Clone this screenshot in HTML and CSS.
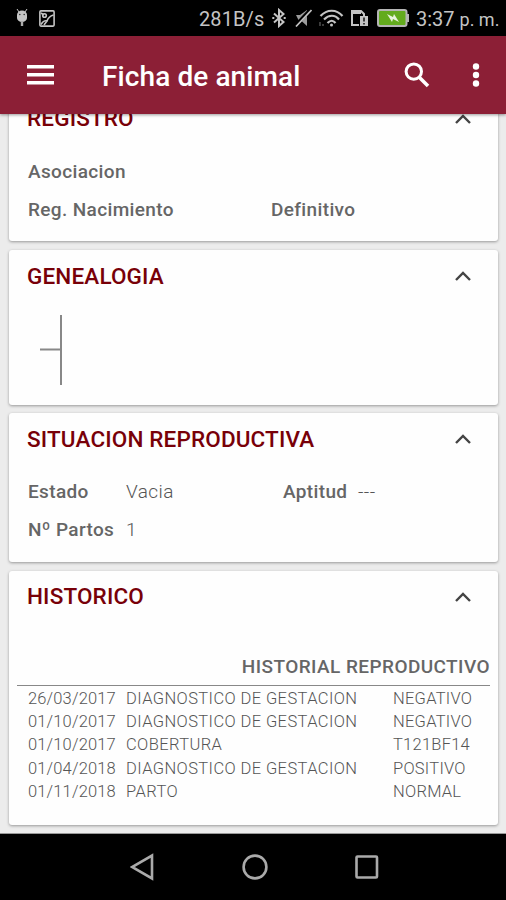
FILE: index.html
```
<!DOCTYPE html>
<html lang="es">
<head>
    <meta charset="UTF-8">
    <meta name="viewport" content="width=device-width, initial-scale=1.0">
    <title>Ficha de animal</title>
    <link rel="stylesheet" href="styles.css">
</head>
<body>
    <div class="status-bar">
        <div class="status-left">
            <svg width="12" height="18" viewBox="0 0 12 18">
                <path d="M1 0l2 3M11 0L9 3" stroke="#c4c4c4" stroke-width="1"/>
                <path d="M1 6a5 4.5 0 0 1 10 0v3a5 4 0 0 1-10 0z" fill="#c4c4c4"/>
                <path d="M6 12v5" stroke="#aaa" stroke-width="2.4"/>
                <circle cx="3.8" cy="5.5" r=".8" fill="#333"/>
                <circle cx="8.2" cy="5.5" r=".8" fill="#333"/>
            </svg>
            <svg width="16" height="17" viewBox="0 0 16 17" fill="none" stroke="#c4c4c4" stroke-width="1.6">
                <rect x=".9" y=".9" width="14.2" height="15.2" rx="1"/>
                <circle cx="5.5" cy="5.5" r="1.8"/>
                <path d="M2 3l3 2M2 14.5c2.500-4 4-4 6-3.500 1-3 3-5 6.500-6M5 15l3-4"/>
            </svg>
        </div>
        <div class="status-right">
            <span class="net-speed">281B/s</span>
            <svg class="i-bt" width="14" height="20" viewBox="0 0 14 20" fill="none" stroke="#c4c4c4" stroke-width="2">
                <path d="M2 5.500l9.500 8.500L7 18V2l4.500 4L2 14.500"/>
                <path d="M.3 10h2M11.700 10h2"/>
            </svg>
            <svg class="i-mute" width="18" height="18" viewBox="0 0 18 18">
                <path d="M2 6h4l7-5v16L7.500 12H5z" fill="#9b9b9b"/>
                <path d="M17 0L1 17" stroke="#000" stroke-width="3.500"/>
                <path d="M17.500 1L2 17.500" stroke="#c4c4c4" stroke-width="1.700"/>
            </svg>
            <svg class="i-wifi" width="25" height="18" viewBox="0 0 25 18" fill="none" stroke="#c4c4c4" stroke-width="2.2">
                <path d="M1.500 7c6.500-7 16-7 22 0M5 10.500c5-5 11-5 15 0M8.500 14c3-3 5.500-3 8 0"/>
                <circle cx="12.500" cy="16" r="1.500" fill="#c4c4c4" stroke="none"/>
                <path d="M1 17v-4M4 17v-2" stroke="#777" stroke-width="1"/>
            </svg>
            <svg class="i-sim" width="19" height="18" viewBox="0 0 19 18">
                <path d="M9 16H2V2h9l3 3v3" fill="none" stroke="#c4c4c4" stroke-width="2"/>
                <path d="M3 2h8v3H3z" fill="#c4c4c4"/>
                <path d="M10 7h8v10h-8z" fill="#c4c4c4"/>
                <path d="M14 8.500v4M14 14v1.500" stroke="#111" stroke-width="1.500"/>
            </svg>
            <svg class="i-batt" width="33" height="18" viewBox="0 0 33 18">
                <rect x="1" y="1" width="28.500" height="16" rx="2" fill="#63ab1d" stroke="#b5b5b5" stroke-width="2"/>
                <path d="M30 5h2v8h-2z" fill="#b5b5b5"/>
                <path d="M10 5l6 3 1-3 5 8-6-3-1 3z" fill="#e8f3dc"/>
            </svg>
            <span class="clock">3:37 <small>p. m.</small></span>
        </div>
    </div>

    <div class="app-bar">
        <svg class="menu" width="27" height="20" viewBox="0 0 27 20" fill="#fff">
            <path d="M0 0h27v3.600H0zM0 8h27v3.600H0zM0 16h27v3.600H0z"/>
        </svg>
        <h1>Ficha de animal</h1>
        <svg class="search" width="26" height="26" viewBox="0 0 26 26" fill="none" stroke="#fff">
            <circle cx="9.800" cy="9.600" r="7.700" stroke-width="3"/>
            <path d="M15.500 15.500l8.500 8.500" stroke-width="3.600"/>
        </svg>
        <svg class="more" width="8" height="24" viewBox="0 0 8 24" fill="#fff">
            <circle cx="4" cy="3.500" r="3.200"/>
            <circle cx="4" cy="12" r="3.200"/>
            <circle cx="4" cy="20.500" r="3.200"/>
        </svg>
    </div>

    <div class="content">
        <div class="card registro">
            <div class="card-header">
                <h2>REGISTRO</h2>
                <svg width="18" height="12" viewBox="0 0 18 12"><path d="M2 10l7-7 7 7"/></svg>
            </div>
            <div class="row"><b>Asociacion</b></div>
            <div class="row"><b>Reg. Nacimiento</b><b>Definitivo</b></div>
        </div>

        <div class="card genealogia">
            <div class="card-header">
                <h2>GENEALOGIA</h2>
                <svg width="18" height="12" viewBox="0 0 18 12"><path d="M2 10l7-7 7 7"/></svg>
            </div>
            <svg class="tree" width="24" height="72" viewBox="0 0 24 72">
                <path d="M1 35.500h21M22 1v70"/>
            </svg>
        </div>

        <div class="card situacion">
            <div class="card-header">
                <h2>SITUACION REPRODUCTIVA</h2>
                <svg width="18" height="12" viewBox="0 0 18 12"><path d="M2 10l7-7 7 7"/></svg>
            </div>
            <div class="row"><b>Estado</b><span>Vacia</span><b>Aptitud</b><span>---</span></div>
            <div class="row"><b>Nº Partos</b><span>1</span></div>
        </div>

        <div class="card historico">
            <div class="card-header">
                <h2>HISTORICO</h2>
                <svg width="18" height="12" viewBox="0 0 18 12"><path d="M2 10l7-7 7 7"/></svg>
            </div>
            <h3>HISTORIAL REPRODUCTIVO</h3>
            <table>
                <tr><td class="date">26/03/2017</td><td class="event">DIAGNOSTICO DE GESTACION</td><td>NEGATIVO</td></tr>
                <tr><td class="date">01/10/2017</td><td class="event">DIAGNOSTICO DE GESTACION</td><td>NEGATIVO</td></tr>
                <tr><td class="date">01/10/2017</td><td class="event">COBERTURA</td><td>T121BF14</td></tr>
                <tr><td class="date">01/04/2018</td><td class="event">DIAGNOSTICO DE GESTACION</td><td>POSITIVO</td></tr>
                <tr><td class="date">01/11/2018</td><td class="event">PARTO</td><td>NORMAL</td></tr>
            </table>
        </div>
    </div>

    <div class="nav-bar">
        <svg width="24" height="28" viewBox="0 0 24 28"><path d="M22 2.500v23L2 14z"/></svg>
        <svg width="26" height="28" viewBox="0 0 26 28"><circle cx="13" cy="14" r="11.400"/></svg>
        <svg width="24" height="28" viewBox="0 0 24 28"><rect x="1.500" y="3.500" width="20.500" height="21" rx="1"/></svg>
    </div>
</body>
</html>
```
FILE: styles.css
```
:root {
    --primary-color: #8c1f36;
    --title-color: #780008;
    --text-color: #666;
    --icon-color: #aaa;
}

* {
    box-sizing: border-box;
    margin: 0;
    padding: 0;
}

body {
    width: 506px;
    height: 900px;
    overflow: hidden;
    display: flex;
    flex-direction: column;
    font-family: Roboto, sans-serif;
    background-color: #ececec;
    color: var(--text-color);
}

svg {
    display: block;
    flex: none;
}

.status-bar {
    flex: none;
    height: 36px;
    padding: 0 8px 0 16px;
    display: flex;
    align-items: center;
    justify-content: space-between;
    background-color: #000;
    color: #c4c4c4;
}

.status-left,
.status-right {
    display: flex;
    align-items: center;
}

.status-left {
    gap: 11px;
}

.status-right {
    white-space: nowrap;
}

.net-speed {
    width: 73px;
    padding-top: 2px;
    font-size: 20px;
    letter-spacing: 0.1px;
}

.i-mute {
    margin-left: 8px;
}

.i-wifi {
    margin-left: 7px;
}

.i-sim {
    margin-left: 6px;
}

.i-batt {
    margin-left: 8px;
}

.clock {
    width: 82px;
    margin-left: 6px;
    padding-top: 2px;
    font-size: 20px;
}

.clock small {
    font-size: 18px;
}

.app-bar {
    flex: none;
    position: relative;
    z-index: 1;
    height: 78px;
    padding: 0 26px 0 27px;
    display: flex;
    align-items: center;
    background-color: var(--primary-color);
    box-shadow: 0 1px 3px rgba(0, 0, 0, 0.4);
}

.app-bar h1 {
    flex: 1;
    margin-left: 48px;
    padding-top: 3px;
    font-size: 28px;
    font-weight: 500;
    letter-spacing: 0.1px;
    color: #fff;
}

.app-bar .more {
    margin-left: 42px;
}

.content {
    flex: none;
    height: 720px;
    padding: 0 8px 0 9px;
    overflow: hidden;
    border-bottom: 1px solid #999;
}

.card {
    margin-bottom: 9px;
    overflow: hidden;
    border-radius: 3px;
    background-color: #fefefe;
    box-shadow: 0 1px 3px rgba(0, 0, 0, 0.36);
}

/* the list is scrolled, first card starts under the app bar */
.registro {
    height: 148px;
    margin-top: -21px;
}

.genealogia {
    height: 155px;
    margin-bottom: 8px;
}

.situacion {
    height: 149px;
}

.historico {
    height: 254px;
}

.card-header {
    height: 60px;
    padding: 0 26px 8px 18px;
    display: flex;
    align-items: center;
    justify-content: space-between;
}

.card-header h2 {
    font-size: 22.5px;
    font-weight: 500;
    letter-spacing: 0.15px;
    color: var(--title-color);
}

.registro h2,
.historico h2 {
    padding-bottom: 2px;
}

.card-header path {
    fill: none;
    stroke: #444;
    stroke-width: 2.4;
}

.row {
    height: 38px;
    padding: 0 0 2px 19px;
    display: grid;
    align-items: center;
    font-size: 19px;
}

.row b {
    font-weight: 500;
    letter-spacing: 0.36px;
}

.row span {
    font-weight: 300;
    letter-spacing: 0.4px;
    color: #555;
}

.registro .row {
    grid-template-columns: 243px 1fr;
}

.situacion .row {
    grid-template-columns: 98px 157px 75px 1fr;
}

.tree {
    margin: 4px 0 0 30px;
}

.tree path {
    fill: none;
    stroke: #888;
    stroke-width: 2;
}

.historico h3 {
    height: 55px;
    margin: 0 8px 1px;
    padding-top: 24px;
    border-bottom: 1px solid #888;
    font-size: 19px;
    line-height: 24px;
    font-weight: 500;
    letter-spacing: 0.42px;
    text-align: right;
}

.historico table {
    border-collapse: collapse;
    margin-left: 19px;
    font-size: 16.5px;
    font-weight: 300;
    letter-spacing: 0.25px;
    color: #555;
}

.historico td {
    height: 23.2px;
    line-height: 23.2px;
    white-space: nowrap;
}

.historico .date {
    width: 98px;
    letter-spacing: 0.15px;
}

.historico .event {
    width: 267px;
    letter-spacing: 0.4px;
}

.nav-bar {
    flex: none;
    height: 66px;
    padding: 0 127px 0 130px;
    display: flex;
    align-items: center;
    justify-content: space-between;
    background-color: #000;
}

.nav-bar svg {
    fill: none;
    stroke: var(--icon-color);
    stroke-width: 2.6;
}
```
